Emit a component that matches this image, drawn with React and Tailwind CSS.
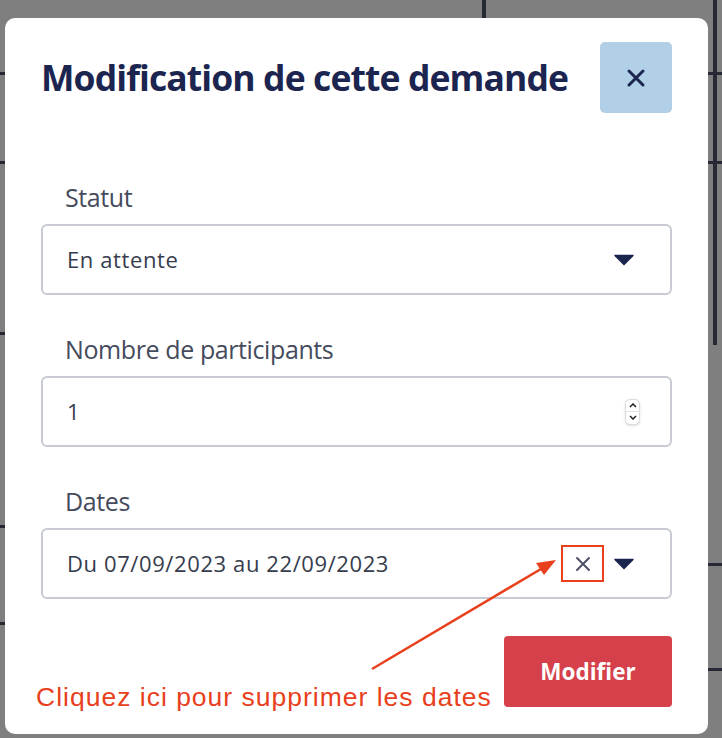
import { useState } from "react";

function Caret() {
  return (
    <svg width="20" height="12" viewBox="0 0 20 12" className="shrink-0">
      <path d="M1 1.5h18L10 10.5z" fill="#1b2550" stroke="#1b2550" strokeWidth="1.5" strokeLinejoin="round" />
    </svg>
  );
}

function Field({ label, children }) {
  return (
    <div className="flex flex-col">
      <div className="pl-6 text-[25px] leading-8 tracking-[-0.4px] text-[#454b5c]">{label}</div>
      <div className="mt-[11px] flex h-[71px] items-center rounded-md border-2 border-[#c8cbd4] pl-6 pr-9 text-[22px] tracking-[0.6px] text-[#363c4d]">
        {children}
      </div>
    </div>
  );
}

export default function App() {
  const [count, setCount] = useState(1);

  return (
    <div
      className="relative h-[738px] w-[722px] overflow-hidden bg-[#7f7f7f]"
      style={{ fontFamily: '"Open Sans", "Noto Sans", sans-serif' }}
    >
      {/* table behind the overlay */}
      <div className="absolute left-[482px] top-0 h-[18px] w-[4px] bg-[#262833]" />
      <div className="absolute left-[713px] top-0 h-[345px] w-[4px] bg-[#262833]" />
      <div className="absolute left-[708px] top-[72px] h-[3px] w-[14px] bg-[#262833]" />
      <div className="absolute left-[708px] top-[161px] h-[3px] w-[14px] bg-[#262833]" />
      <div className="absolute left-[708px] top-[563px] h-[3px] w-[14px] bg-[#262833]" />
      <div className="absolute left-[708px] top-[668px] h-[3px] w-[14px] bg-[#262833]" />
      <div className="absolute left-[0px] top-[72px] h-[3px] w-[6px] bg-[#262833]" />
      <div className="absolute left-[0px] top-[161px] h-[3px] w-[6px] bg-[#262833]" />
      <div className="absolute left-[0px] top-[332px] h-[3px] w-[6px] bg-[#262833]" />
      <div className="absolute left-[0px] top-[525px] h-[3px] w-[6px] bg-[#262833]" />
      <div className="absolute left-[0px] top-[622px] h-[3px] w-[6px] bg-[#262833]" />

      {/* modal */}
      <div className="absolute left-[5px] top-[18px] flex h-[716px] w-[703px] flex-col rounded-[10px] bg-white pl-9 pr-[36px] pt-6">
        <div className="flex items-center justify-between">
          <h2 className="text-[35.5px] font-bold tracking-[-0.9px] text-[#1b2550]">Modification de cette demande</h2>
          <button className="flex h-[71px] w-[72px] items-center justify-center rounded-[5px] bg-[#b1cfe6]">
            <svg width="20" height="20" viewBox="0 0 20 20">
              <path d="M3 3l14 14M17 3L3 17" stroke="#1b2550" strokeWidth="3" strokeLinecap="round" />
            </svg>
          </button>
        </div>

        <div className="mt-[68px] flex flex-col gap-[38px]">
          <Field label="Statut">
            <span className="flex-1">En attente</span>
            <Caret />
          </Field>

          <Field label="Nombre de participants">
            <span className="flex-1">{count}</span>
            <div className="-mr-[6px] flex h-[26px] w-[15px] flex-col overflow-hidden rounded-[5px] border border-[#dcdcdc] bg-white shadow-sm">
              <button onClick={() => setCount(count + 1)} className="flex flex-1 items-center justify-center border-b border-[#e2e2e2]">
                <svg width="8" height="5" viewBox="0 0 8 5"><path d="M1 4l3-3 3 3" stroke="#222" strokeWidth="1.5" fill="none" /></svg>
              </button>
              <button onClick={() => setCount(Math.max(0, count - 1))} className="flex flex-1 items-center justify-center">
                <svg width="8" height="5" viewBox="0 0 8 5"><path d="M1 1l3 3 3-3" stroke="#222" strokeWidth="1.5" fill="none" /></svg>
              </button>
            </div>
          </Field>

          <Field label="Dates">
            <span className="flex-1">Du 07/09/2023 au 22/09/2023</span>
            <div className="mr-[10px] flex h-[37px] w-[43px] items-center justify-center border-2 border-[#e8401c]">
              <svg width="16" height="16" viewBox="0 0 16 16">
                <path d="M2 2l12 12M14 2L2 14" stroke="#4d5366" strokeWidth="2" strokeLinecap="round" />
              </svg>
            </div>
            <Caret />
          </Field>
        </div>

        <div className="mt-[37px] flex items-end justify-between">
          <div
            className="-mb-[5px] -ml-[5px] text-[26.5px] leading-[30px] tracking-[1px] text-[#e8401c]"
            style={{ fontFamily: '"Liberation Sans", Arial, sans-serif' }}
          >
            Cliquez ici pour supprimer les dates
          </div>
          <button className="h-[71px] w-[168px] shrink-0 rounded-[4px] bg-[#d5404a] text-[22.5px] font-bold text-white">
            Modifier
          </button>
        </div>
      </div>

      {/* annotation arrow */}
      <svg className="pointer-events-none absolute left-0 top-0" width="722" height="738">
        <line x1="372" y1="669" x2="546" y2="566" stroke="#e8401c" strokeWidth="2.5" />
        <path d="M556 560l-20 3 8 12z" fill="#e8401c" />
      </svg>
    </div>
  );
}
